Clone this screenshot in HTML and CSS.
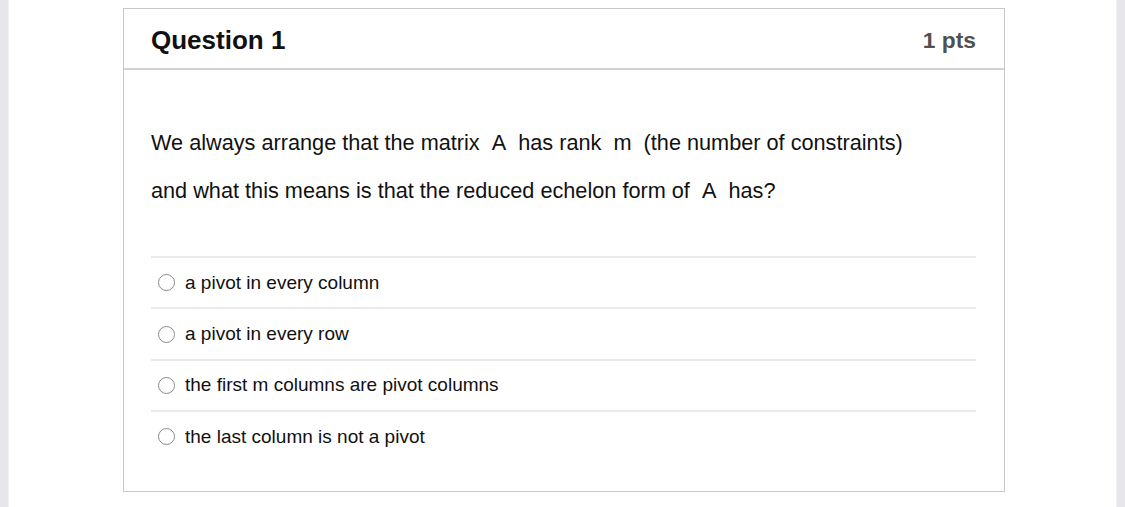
FILE: index.html
```html
<!DOCTYPE html>
<html>
<head>
<meta charset="utf-8">
<link rel="stylesheet" href="styles.css">
</head>
<body>
<div class="page">
  <div class="strip strip-left"></div>
  <main class="main">
    <section class="question">
      <header class="q-header">
        <h2 class="q-title">Question 1</h2>
        <span class="q-points">1 pts</span>
      </header>
      <div class="q-body">
        <p class="q-text">We always arrange that the matrix &nbsp;A&nbsp; has rank &nbsp;m&nbsp; (the number of constraints)</p>
        <p class="q-text">and what this means is that the reduced echelon form of &nbsp;A&nbsp; has?</p>
        <div class="answers">
          <label class="answer"><span class="radio"></span><span class="answer-text">a pivot in every column</span></label>
          <label class="answer"><span class="radio"></span><span class="answer-text">a pivot in every row</span></label>
          <label class="answer"><span class="radio"></span><span class="answer-text">the first m columns are pivot columns</span></label>
          <label class="answer"><span class="radio"></span><span class="answer-text">the last column is not a pivot</span></label>
        </div>
      </div>
    </section>
  </main>
  <div class="strip strip-right"></div>
</div>
</body>
</html>
```
FILE: styles.css
```css
html, body {
  margin: 0;
  padding: 0;
  background: #ffffff;
  font-family: "Liberation Sans", Arial, sans-serif;
  color: #111111;
}
.page {
  display: flex;
  height: 507px;
  overflow: hidden;
}
.strip {
  width: 8px;
  flex: none;
  background: #e7e7eb;
}
.strip-left {
  border-right: 1px solid #f0f0f2;
}
.strip-right {
  border-left: 1px solid #f0f0f2;
}
.main {
  flex: 1;
  padding: 8px 0 0 114px;
}
.question {
  width: 880px;
  border: 1px solid #c8c8c8;
  background: #ffffff;
}
.q-header {
  display: flex;
  justify-content: space-between;
  align-items: center;
  height: 59px;
  box-sizing: border-box;
  padding: 3px 28px 0 27px;
  border-bottom: 2px solid #d2d2d2;
  height: 61px;
}
.q-title {
  margin: 0;
  font-size: 26px;
  font-weight: bold;
  color: #111111;
}
.q-points {
  font-size: 22.8px;
  font-weight: bold;
  color: #505050;
}
.q-body {
  padding: 49px 28px 29px 27px;
}
.q-text {
  margin: 0;
  font-size: 21.7px;
  line-height: 48px;
  white-space: pre-wrap;
}
.answers {
  margin-top: 41px;
}
.answer {
  display: flex;
  align-items: center;
  height: 49.4px;
  border-top: 2px solid #ebebeb;
}
.radio {
  width: 17px;
  height: 17px;
  box-sizing: border-box;
  border: 1.5px solid #8a8a8a;
  border-radius: 50%;
  margin-left: 7px;
  margin-right: 10px;
  flex: none;
}
.answer-text {
  font-size: 19px;
  color: #111111;
}
```
